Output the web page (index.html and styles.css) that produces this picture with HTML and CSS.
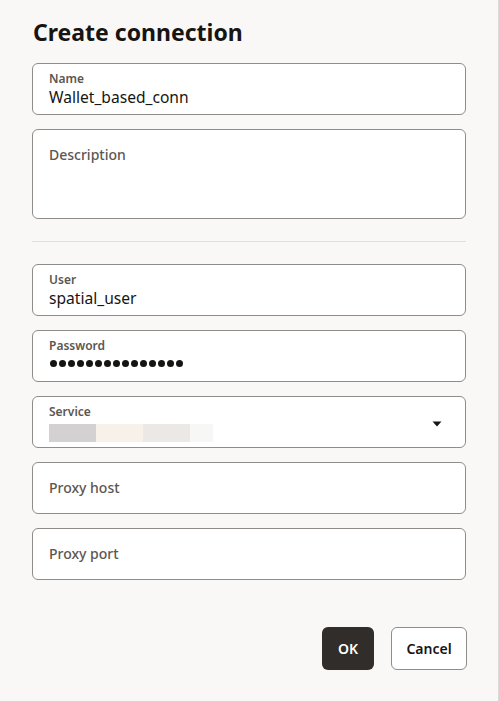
FILE: index.html
```html
<!DOCTYPE html>
<html>
<head>
<meta charset="utf-8">
<link rel="stylesheet" href="styles.css">
</head>
<body>
<div class="dialog">
  <h1 class="title">Create connection</h1>
  <div class="form">
    <div class="field filled">
      <span class="label">Name</span>
      <span class="value">Wallet_based_conn</span>
    </div>
    <div class="field area">
      <span class="placeholder">Description</span>
    </div>
    <hr class="divider">
    <div class="field filled">
      <span class="label">User</span>
      <span class="value">spatial_user</span>
    </div>
    <div class="field filled">
      <span class="label">Password</span>
      <span class="dots"><i></i><i></i><i></i><i></i><i></i><i></i><i></i><i></i><i></i><i></i><i></i><i></i><i></i><i></i><i></i></span>
    </div>
    <div class="field filled select">
      <div class="select-body">
        <span class="label">Service</span>
        <span class="masked"><b class="m1"></b><b class="m2"></b><b class="m3"></b><b class="m4"></b></span>
      </div>
      <svg class="caret" width="10" height="6" viewBox="0 0 10 6"><path d="M0.5 0.5 H9.5 L5 5.5 Z" fill="#161513"/></svg>
    </div>
    <div class="field empty">
      <span class="placeholder">Proxy host</span>
    </div>
    <div class="field empty">
      <span class="placeholder">Proxy port</span>
    </div>
  </div>
  <div class="actions">
    <button class="btn primary">OK</button>
    <button class="btn secondary">Cancel</button>
  </div>
</div>
</body>
</html>
```
FILE: styles.css
```css
html, body {
  margin: 0;
  padding: 0;
}
body {
  background: #f9f8f6;
  font-family: "Noto Sans", "Open Sans", sans-serif;
  color: #161513;
}
.dialog {
  box-sizing: border-box;
  width: 499px;
  height: 701px;
  padding: 16px 32px 0 32px;
  border-right: 1px solid #d9d8d6;
  display: flex;
  flex-direction: column;
}
.title {
  margin: 0 0 0 1px;
  font-size: 23px;
  line-height: 32px;
  font-weight: 700;
  color: #161513;
}
.form {
  margin-top: 15px;
  display: flex;
  flex-direction: column;
  gap: 14px;
}
.field {
  box-sizing: border-box;
  height: 52px;
  border: 1px solid #8f8c89;
  border-radius: 6px;
  background: #fff;
  padding: 0 16px;
  display: flex;
  flex-direction: column;
}
.filled {
  padding-top: 7px;
}
.label {
  font-size: 12px;
  line-height: 16px;
  font-weight: 600;
  color: #5b5652;
}
.value {
  font-size: 15.6px;
  line-height: 20px;
  color: #161513;
}
.area {
  height: 90px;
  padding-top: 15px;
}
.empty {
  justify-content: center;
}
.placeholder {
  font-size: 14px;
  line-height: 20px;
  font-weight: 500;
  color: #5b5652;
}
.divider {
  margin: 8px 0;
  border: 0;
  border-top: 1px solid #e3e0dc;
  height: 0;
}
.dots {
  display: flex;
  gap: 2px;
  margin-top: 6px;
  margin-left: 1px;
}
.dots i {
  width: 7px;
  height: 7px;
  border-radius: 50%;
  background: #161513;
}
.select {
  flex-direction: row;
  align-items: flex-start;
}
.select-body {
  flex: 1;
  display: flex;
  flex-direction: column;
}
.masked {
  display: flex;
  margin-top: 4px;
  height: 18px;
}
.masked b {
  display: block;
  height: 18px;
}
.m1 { width: 47px; background: #d3d1d1; }
.m2 { width: 47px; background: #f7f1ea; }
.m3 { width: 47px; background: #ece8e5; }
.m4 { width: 23px; background: #f7f7f5; }
.caret {
  margin-top: 17px;
  margin-right: 7px;
}
.actions {
  margin-top: 47px;
  margin-right: -1px;
  display: flex;
  justify-content: flex-end;
  gap: 17px;
}
.btn {
  box-sizing: border-box;
  height: 43px;
  border-radius: 6px;
  font-family: inherit;
  font-size: 14px;
  font-weight: 600;
  padding: 0;
}
.primary {
  width: 52px;
  background: #312d2a;
  color: #fff;
  border: 0;
}
.secondary {
  width: 76px;
  background: #fff;
  color: #161513;
  border: 1px solid #8f8c89;
}
```
